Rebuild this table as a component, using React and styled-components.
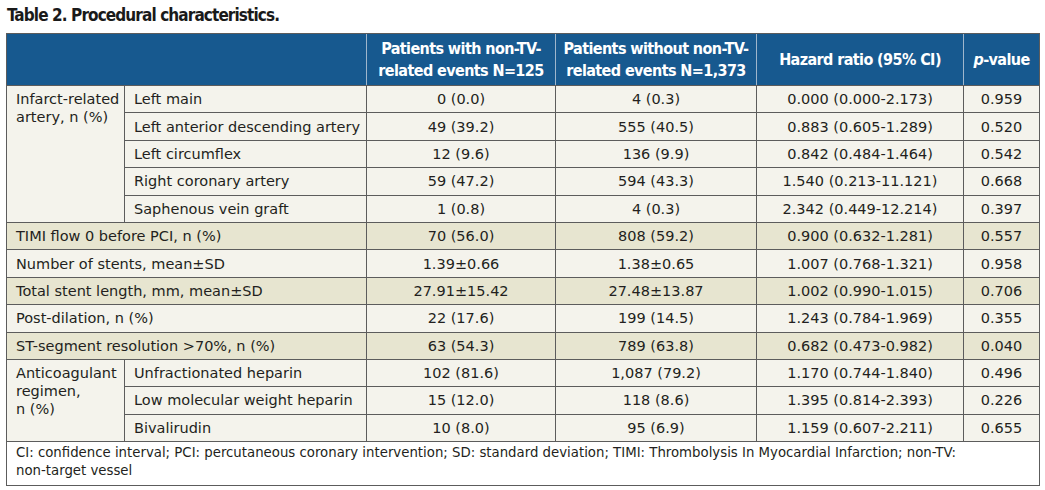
import React from "react";
import styled, { createGlobalStyle } from "styled-components";

const GlobalStyle = createGlobalStyle`
  body {
    margin: 0;
    background: #ffffff;
    font-family: "DejaVu Sans", "Liberation Sans", sans-serif;
    color: #231f20;
  }
`;

const Page = styled.div`
  width: 1045px;
  height: 490px;
  padding: 4px 6px 0 6px;
  box-sizing: border-box;
`;

const Title = styled.h2`
  margin: 0 0 7px 1px;
  font-family: "DejaVu Sans Condensed", "DejaVu Sans", sans-serif;
  font-stretch: condensed;
  font-weight: bold;
  font-size: 17px;
  letter-spacing: -0.9px;
  line-height: 22px;
  color: #1a1a1a;
`;

const Table = styled.table`
  width: 1033px;
  border-collapse: collapse;
  table-layout: fixed;
  border: 1px solid #5c5c5c;
`;

const HeadCell = styled.th`
  background: #17598f;
  color: #ffffff;
  height: 51px;
  padding: 0 1px;
  font-family: "DejaVu Sans Condensed", "DejaVu Sans", sans-serif;
  font-stretch: condensed;
  font-weight: bold;
  font-size: 16px;
  letter-spacing: -0.6px;
  line-height: 22px;
  text-align: center;
  vertical-align: middle;
  white-space: nowrap;
  border-left: 1px solid #9fb6cc;
  border-top: 1px solid #5c5c5c;
  border-bottom: 1px solid #5c5c5c;
  &:first-child {
    border-left: 1px solid #5c5c5c;
  }
  i {
    font-style: italic;
  }
`;

const Row = styled.tr`
  background: ${(p) => (p.$shade ? "#e7e5d0" : "#f4f3ec")};
`;

const Cell = styled.td`
  border: 1px solid #5c5c5c;
  height: 26.4px;
  padding: 0 9px;
  font-size: 14.5px;
  line-height: 18px;
  text-align: ${(p) => (p.$center ? "center" : "left")};
  vertical-align: ${(p) => (p.$top ? "top" : "middle")};
  padding-top: ${(p) => (p.$top ? "4px" : "0")};
  white-space: nowrap;
`;

const GroupCell = styled(Cell)`
  padding-right: 0;
  line-height: 18px;
`;

const Footer = styled.td`
  background: #ffffff;
  border: 1px solid #5c5c5c;
  padding: 2px 9px 3px 9px;
  font-size: 13.3px;
  line-height: 18px;
  height: 38px;
  vertical-align: top;
  white-space: nowrap;
`;

const groups = [
  {
    label: ["Infarct-related", <br key="b" />, "artery, n (%)"],
    rows: [
      ["Left main", "0 (0.0)", "4 (0.3)", "0.000 (0.000-2.173)", "0.959"],
      ["Left anterior descending artery", "49 (39.2)", "555 (40.5)", "0.883 (0.605-1.289)", "0.520"],
      ["Left circumflex", "12 (9.6)", "136 (9.9)", "0.842 (0.484-1.464)", "0.542"],
      ["Right coronary artery", "59 (47.2)", "594 (43.3)", "1.540 (0.213-11.121)", "0.668"],
      ["Saphenous vein graft", "1 (0.8)", "4 (0.3)", "2.342 (0.449-12.214)", "0.397"],
    ],
  },
  { label: "TIMI flow 0 before PCI, n (%)", shade: true, values: ["70 (56.0)", "808 (59.2)", "0.900 (0.632-1.281)", "0.557"] },
  { label: "Number of stents, mean±SD", values: ["1.39±0.66", "1.38±0.65", "1.007 (0.768-1.321)", "0.958"] },
  { label: "Total stent length, mm, mean±SD", shade: true, values: ["27.91±15.42", "27.48±13.87", "1.002 (0.990-1.015)", "0.706"] },
  { label: "Post-dilation, n (%)", values: ["22 (17.6)", "199 (14.5)", "1.243 (0.784-1.969)", "0.355"] },
  { label: "ST-segment resolution >70%, n (%)", shade: true, values: ["63 (54.3)", "789 (63.8)", "0.682 (0.473-0.982)", "0.040"] },
  {
    label: ["Anticoagulant", <br key="b1" />, "regimen,", <br key="b2" />, "n (%)"],
    rows: [
      ["Unfractionated heparin", "102 (81.6)", "1,087 (79.2)", "1.170 (0.744-1.840)", "0.496"],
      ["Low molecular weight heparin", "15 (12.0)", "118 (8.6)", "1.395 (0.814-2.393)", "0.226"],
      ["Bivalirudin", "10 (8.0)", "95 (6.9)", "1.159 (0.607-2.211)", "0.655"],
    ],
  },
];

const App = () => {
  const body = [];
  groups.forEach((g, gi) => {
    if (g.rows) {
      g.rows.forEach((r, ri) => {
        body.push(
          <Row key={`${gi}-${ri}`}>
            {ri === 0 && (
              <GroupCell rowSpan={g.rows.length} $top>
                {g.label}
              </GroupCell>
            )}
            <Cell>{r[0]}</Cell>
            {r.slice(1).map((v, vi) => (
              <Cell key={vi} $center>
                {v}
              </Cell>
            ))}
          </Row>
        );
      });
    } else {
      body.push(
        <Row key={gi} $shade={g.shade}>
          <Cell colSpan={2}>{g.label}</Cell>
          {g.values.map((v, vi) => (
            <Cell key={vi} $center>
              {v}
            </Cell>
          ))}
        </Row>
      );
    }
  });

  return (
    <Page>
      <GlobalStyle />
      <Title>Table 2. Procedural characteristics.</Title>
      <Table>
        <colgroup>
          <col style={{ width: 118 }} />
          <col style={{ width: 242 }} />
          <col style={{ width: 189 }} />
          <col style={{ width: 201 }} />
          <col style={{ width: 207 }} />
          <col style={{ width: 76 }} />
        </colgroup>
        <thead>
          <tr>
            <HeadCell colSpan={2} />
            <HeadCell>
              Patients with non-TV-
              <br />
              related events N=125
            </HeadCell>
            <HeadCell>
              Patients without non-TV-
              <br />
              related events N=1,373
            </HeadCell>
            <HeadCell>Hazard ratio (95% CI)</HeadCell>
            <HeadCell>
              <i>p</i>-value
            </HeadCell>
          </tr>
        </thead>
        <tbody>
          {body}
          <tr>
            <Footer colSpan={6}>
              CI: confidence interval; PCI: percutaneous coronary intervention; SD: standard deviation; TIMI:
              Thrombolysis In Myocardial Infarction; non-TV:
              <br />
              non-target vessel
            </Footer>
          </tr>
        </tbody>
      </Table>
    </Page>
  );
};

export default App;
